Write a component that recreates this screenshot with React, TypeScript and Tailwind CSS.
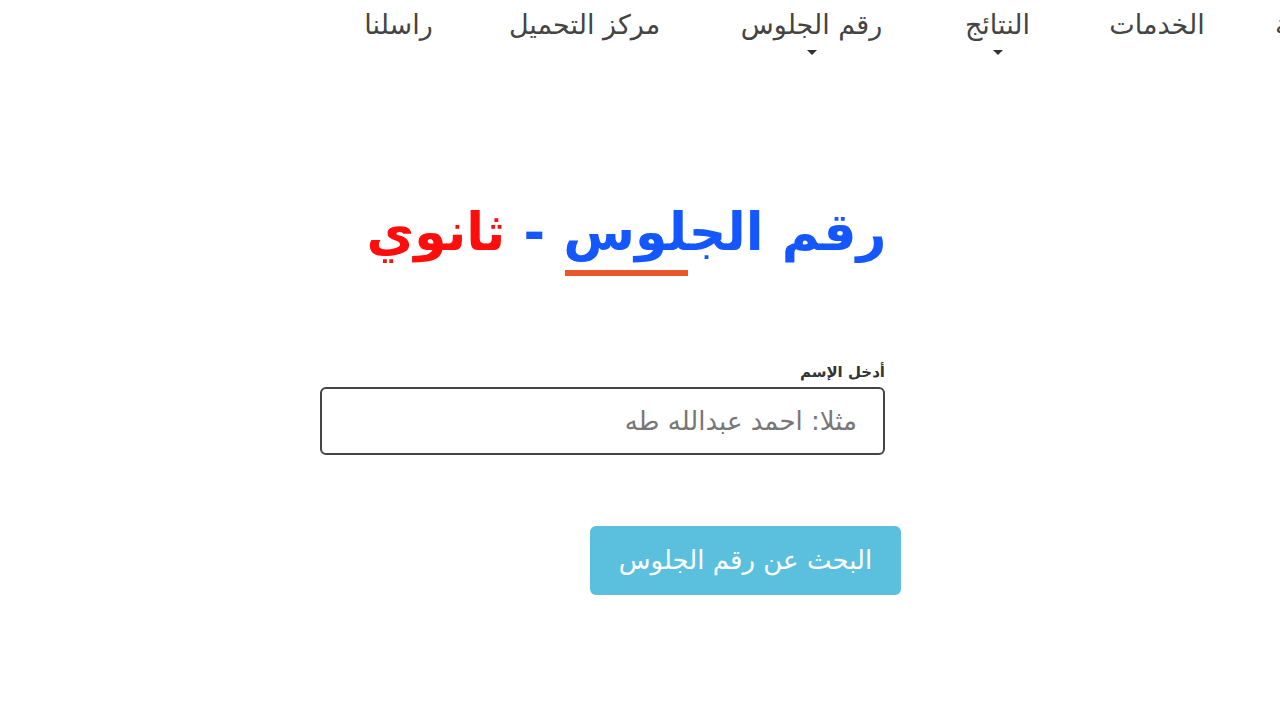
export default function App() {
  const nav = [
    { label: 'الرئيسية', caret: false, w: 'w-[110px] items-end' },
    { label: 'الخدمات', caret: false, w: 'w-[104px] items-center' },
    { label: 'النتائج', caret: true, w: 'w-[83px] items-center' },
    { label: 'رقم الجلوس', caret: true, w: 'w-[157px] items-center' },
    { label: 'مركز التحميل', caret: false, w: 'w-[165px] items-center' },
    { label: 'راسلنا', caret: false, w: 'w-[75px] items-center' },
  ];

  return (
    <div dir="rtl" className="min-h-[720px] bg-white overflow-hidden" style={{ fontFamily: '"DejaVu Sans", "Noto Sans", sans-serif' }}>
      {/* top navigation */}
      <nav className="flex items-start gap-[66px] mr-[-105px] h-[70px]">
        {nav.map((item) => (
          <div key={item.label} className={`${item.w} shrink-0 flex flex-col pt-[6px]`}>
            <span className="text-[27px] leading-[38px] text-[#444] whitespace-nowrap">{item.label}</span>
            {item.caret && (
              <span className="mt-[6px] block w-0 h-0 border-l-[5px] border-r-[5px] border-t-[5px] border-l-transparent border-r-transparent border-t-[#333]" />
            )}
          </div>
        ))}
      </nav>

      <div className="pr-[379px] pt-[127px]">
        <div className="w-[581px] flex flex-col">
          {/* title */}
          <div className="mr-4 flex flex-col items-center w-[517px]">
            <h1 className="text-[52px] leading-[70px] font-bold whitespace-nowrap">
              <span className="text-[#1457ff]">رقم الجلوس -</span>{' '}
              <span className="text-[#ff0d0d]">ثانوي</span>
            </h1>
            <div className="mt-[3px] h-[6px] w-[123px] bg-[#e9572b]" />
          </div>

          {/* form */}
          <label className="mt-[85px] mr-4 text-[15px] leading-[22px] font-bold text-[#333]">أدخل الإسم</label>
          <input
            type="text"
            placeholder="مثلا: احمد عبدالله طه"
            className="mt-[4px] mr-4 w-[565px] h-[68px] rounded-[6px] border-2 border-[#444] px-[26px] text-[26px] text-[#333] placeholder:text-[#777] outline-none"
          />

          <button className="mt-[71px] self-start w-[311px] h-[69px] rounded-[6px] bg-[#5bc0de] text-white text-[26px]">
            البحث عن رقم الجلوس
          </button>
        </div>
      </div>
    </div>
  );
}
